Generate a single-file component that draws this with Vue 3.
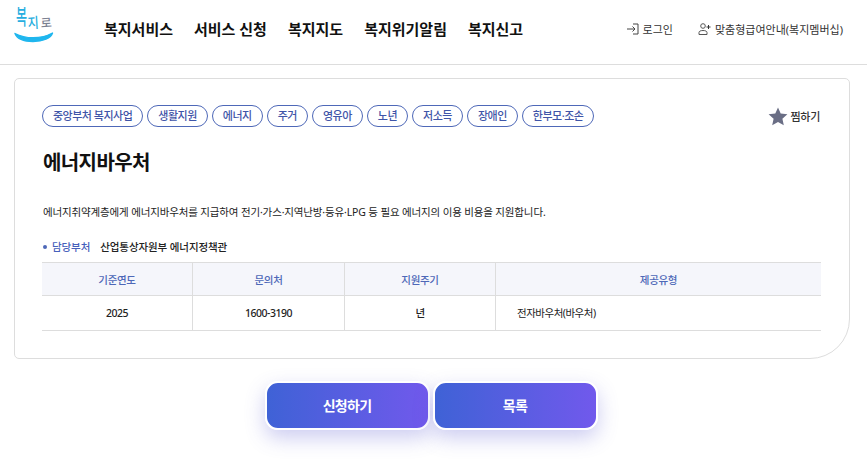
<template>
  <div class="page">
    <header class="top">
      <div class="logo">
        <div class="logo-text"><span class="c1">복</span><span class="c2">지</span><span class="c3">로</span></div>
        <svg class="smile" width="42" height="12" viewBox="0 0 42 12">
          <path d="M2 2.5C12 8 28 8.500 39.5 2C38 7 30 10.5 20 10.5C11 10.5 4 7.5 2 2.5Z" fill="#1fb6ee" stroke="#1fb6ee" stroke-width="1.4" stroke-linejoin="round" />
        </svg>
      </div>
      <nav class="gnb">
        <a v-for="m in menus" :key="m">{{ m }}</a>
      </nav>
      <div class="util">
        <a class="login">
          <svg width="12" height="12" viewBox="0 0 12 12" fill="none" stroke="#444" stroke-width="1">
            <path d="M0 6H8M5.5 3.5L8 6L5.5 8.500M6 1H11V11H6" />
          </svg>
          로그인
        </a>
        <a class="member">
          <svg width="13" height="12" viewBox="0 0 13 12" fill="none" stroke="#555" stroke-width="1">
            <circle cx="5" cy="3" r="2.300" />
            <path d="M1 11.500V9.500C1 8.300 2.500 7.500 5 7.500C7.500 7.500 9 8.300 9 9.500V11.500H1Z" />
            <path d="M10.500 2V6M8.500 4H12.500" stroke="#333" />
          </svg>
          맞춤형급여안내(복지멤버십)
        </a>
      </div>
    </header>

    <main class="wrap">
      <section class="card">
        <div class="tag-row">
          <ul class="tags">
            <li v-for="t in tags" :key="t">{{ t }}</li>
          </ul>
          <button class="fav">
            <svg width="20" height="19" viewBox="0 0 20 19">
              <path d="M10 0.500L12.700 6.600L19.400 7.300L14.400 11.700L15.800 18.300L10 15L4.200 18.300L5.600 11.700L0.600 7.300L7.300 6.600Z" fill="#6a6e85" />
            </svg>
            찜하기
          </button>
        </div>
        <h1>에너지바우처</h1>
        <p class="desc">에너지취약계층에게 에너지바우처를 지급하여 전기·가스·지역난방·등유·LPG 등 필요 에너지의 이용 비용을 지원합니다.</p>
        <div class="dept">
          <span class="dept-label">담당부처</span>
          <span>산업통상자원부 에너지정책관</span>
        </div>
        <table>
          <thead>
            <tr>
              <th class="c-1">기준연도</th>
              <th class="c-2">문의처</th>
              <th class="c-3">지원주기</th>
              <th>제공유형</th>
            </tr>
          </thead>
          <tbody>
            <tr>
              <td>2025</td>
              <td>1600-3190</td>
              <td>년</td>
              <td class="left">전자바우처(바우처)</td>
            </tr>
          </tbody>
        </table>
      </section>
      <div class="actions">
        <button>신청하기</button>
        <button>목록</button>
      </div>
    </main>
  </div>
</template>

<script setup>
const menus = ['복지서비스', '서비스 신청', '복지지도', '복지위기알림', '복지신고']
const tags = ['중앙부처 복지사업', '생활지원', '에너지', '주거', '영유아', '노년', '저소득', '장애인', '한부모·조손']
</script>

<style>
html,
body {
  background: #fff;
  overflow: hidden;
}
</style>

<style scoped>
.page {
  width: 867px;
  height: 463px;
  font-family: "Noto Sans", "Noto Sans CJK KR", sans-serif;
  color: #111;
  letter-spacing: -0.3px;
}
.top {
  height: 64px;
  border-bottom: 1px solid #ddd;
  display: flex;
  align-items: center;
}
.logo {
  width: 104px;
  padding: 3px 0 0 13px;
  box-sizing: border-box;
  align-self: flex-start;
}
.logo-text {
  height: 24px;
  margin-top: 6px;
  display: flex;
  padding-left: 3px;
  font-size: 12px;
  line-height: 16px;
  letter-spacing: 0;
  font-weight: 500;
}
.logo-text span {
  display: block;
  width: 12px;
}
.logo-text .c1 {
  color: #27aee0;
  transform: translateY(3px) scaleY(1.75);
}
.logo-text .c2 {
  color: #27aee0;
  transform: translateY(7px) scaleY(1.2) rotate(-4deg);
}
.logo-text .c3 {
  color: #7b8191;
  margin-left: 1px;
  transform: translateY(6px) rotate(-4deg);
}
.smile {
  display: block;
  margin-top: -2px;
}
.gnb {
  display: flex;
  gap: 21px;
  font-size: 15px;
  font-weight: 700;
  margin-top: -8px;
  color: #111;
  letter-spacing: 0;
}
.util {
  margin-left: auto;
  display: flex;
  gap: 25px;
  font-size: 11px;
  color: #333;
  padding-right: 24px;
  margin-top: -6px;
  letter-spacing: 0;
}
.util a {
  display: flex;
  align-items: center;
  gap: 4px;
}
.wrap {
  padding: 13px 17px 0 14px;
}
.card {
  height: 281px;
  box-sizing: border-box;
  border: 1px solid #ddd;
  border-radius: 5px 5px 40px 5px;
  padding: 26px 28px 0 27px;
}
.tag-row {
  display: flex;
  align-items: center;
  justify-content: space-between;
}
.tags {
  display: flex;
  gap: 4px;
  list-style: none;
  margin: 0;
  padding: 0;
}
.tags li {
  height: 22px;
  box-sizing: border-box;
  border: 1px solid #4e68b8;
  border-radius: 11px;
  padding: 0 10px;
  font-size: 11px;
  line-height: 19px;
  color: #3f55a8;
  font-weight: 500;
  letter-spacing: -0.5px;
}
.fav {
  display: flex;
  align-items: center;
  gap: 3px;
  border: 0;
  background: none;
  padding: 0;
  font: inherit;
  font-size: 11px;
  font-weight: 500;
  color: #333;
  letter-spacing: -0.3px;
  margin-right: 1px;
}
h1 {
  margin: 21px 0 0;
  font-size: 20px;
  line-height: 30px;
  font-weight: 700;
  color: #111;
  letter-spacing: -0.6px;
  padding-left: 1px;
}
.desc {
  margin: 26px 0 0;
  padding-left: 1px;
  font-size: 10.500px;
  line-height: 16px;
  color: #222;
  letter-spacing: -0.15px;
}
.dept {
  margin-top: 19px;
  display: flex;
  gap: 10px;
  font-size: 10.500px;
  line-height: 16px;
  font-weight: 500;
  color: #222;
  position: relative;
  padding-left: 10px;
  letter-spacing: -0.1px;
}
.dept::before {
  content: "";
  position: absolute;
  left: 1px;
  top: 6px;
  width: 4px;
  height: 4px;
  border-radius: 50%;
  background: #4e68b8;
}
.dept-label {
  color: #4660bb;
}
table {
  width: 779px;
  margin: 7px 0 0;
  border-collapse: collapse;
  table-layout: fixed;
  font-size: 10.500px;
}
th {
  height: 32px;
  padding: 0;
  background: #f5f6fb;
  border-top: 1px solid #ddd;
  border-bottom: 1px solid #ddd;
  border-right: 1px solid #ddd;
  color: #4e68b8;
  font-weight: 500;
}
th:last-child,
td:last-child {
  border-right: 0;
}
.c-1 {
  width: 150px;
}
.c-2 {
  width: 151px;
}
.c-3 {
  width: 150px;
}
td {
  height: 33px;
  padding: 0 0 1px;
  text-align: center;
  border-bottom: 1px solid #ddd;
  border-right: 1px solid #ddd;
  color: #222;
  font-weight: 500;
  letter-spacing: -0.5px;
}
td.left {
  text-align: left;
  padding-left: 21px;
  font-weight: 400;
}
.actions {
  display: flex;
  justify-content: center;
  gap: 3px;
  margin-top: 22px;
  padding-right: 2px;
}
.actions button {
  width: 165px;
  height: 49px;
  border: 2px solid #fff;
  border-radius: 13px;
  background: linear-gradient(90deg, #3f62d6, #7159ec);
  color: #fff;
  font: inherit;
  font-size: 14px;
  font-weight: 700;
  letter-spacing: -0.7px;
  padding: 0 0 2px;
  box-shadow: 0 8px 20px rgba(90, 90, 210, 0.3);
}
</style>
